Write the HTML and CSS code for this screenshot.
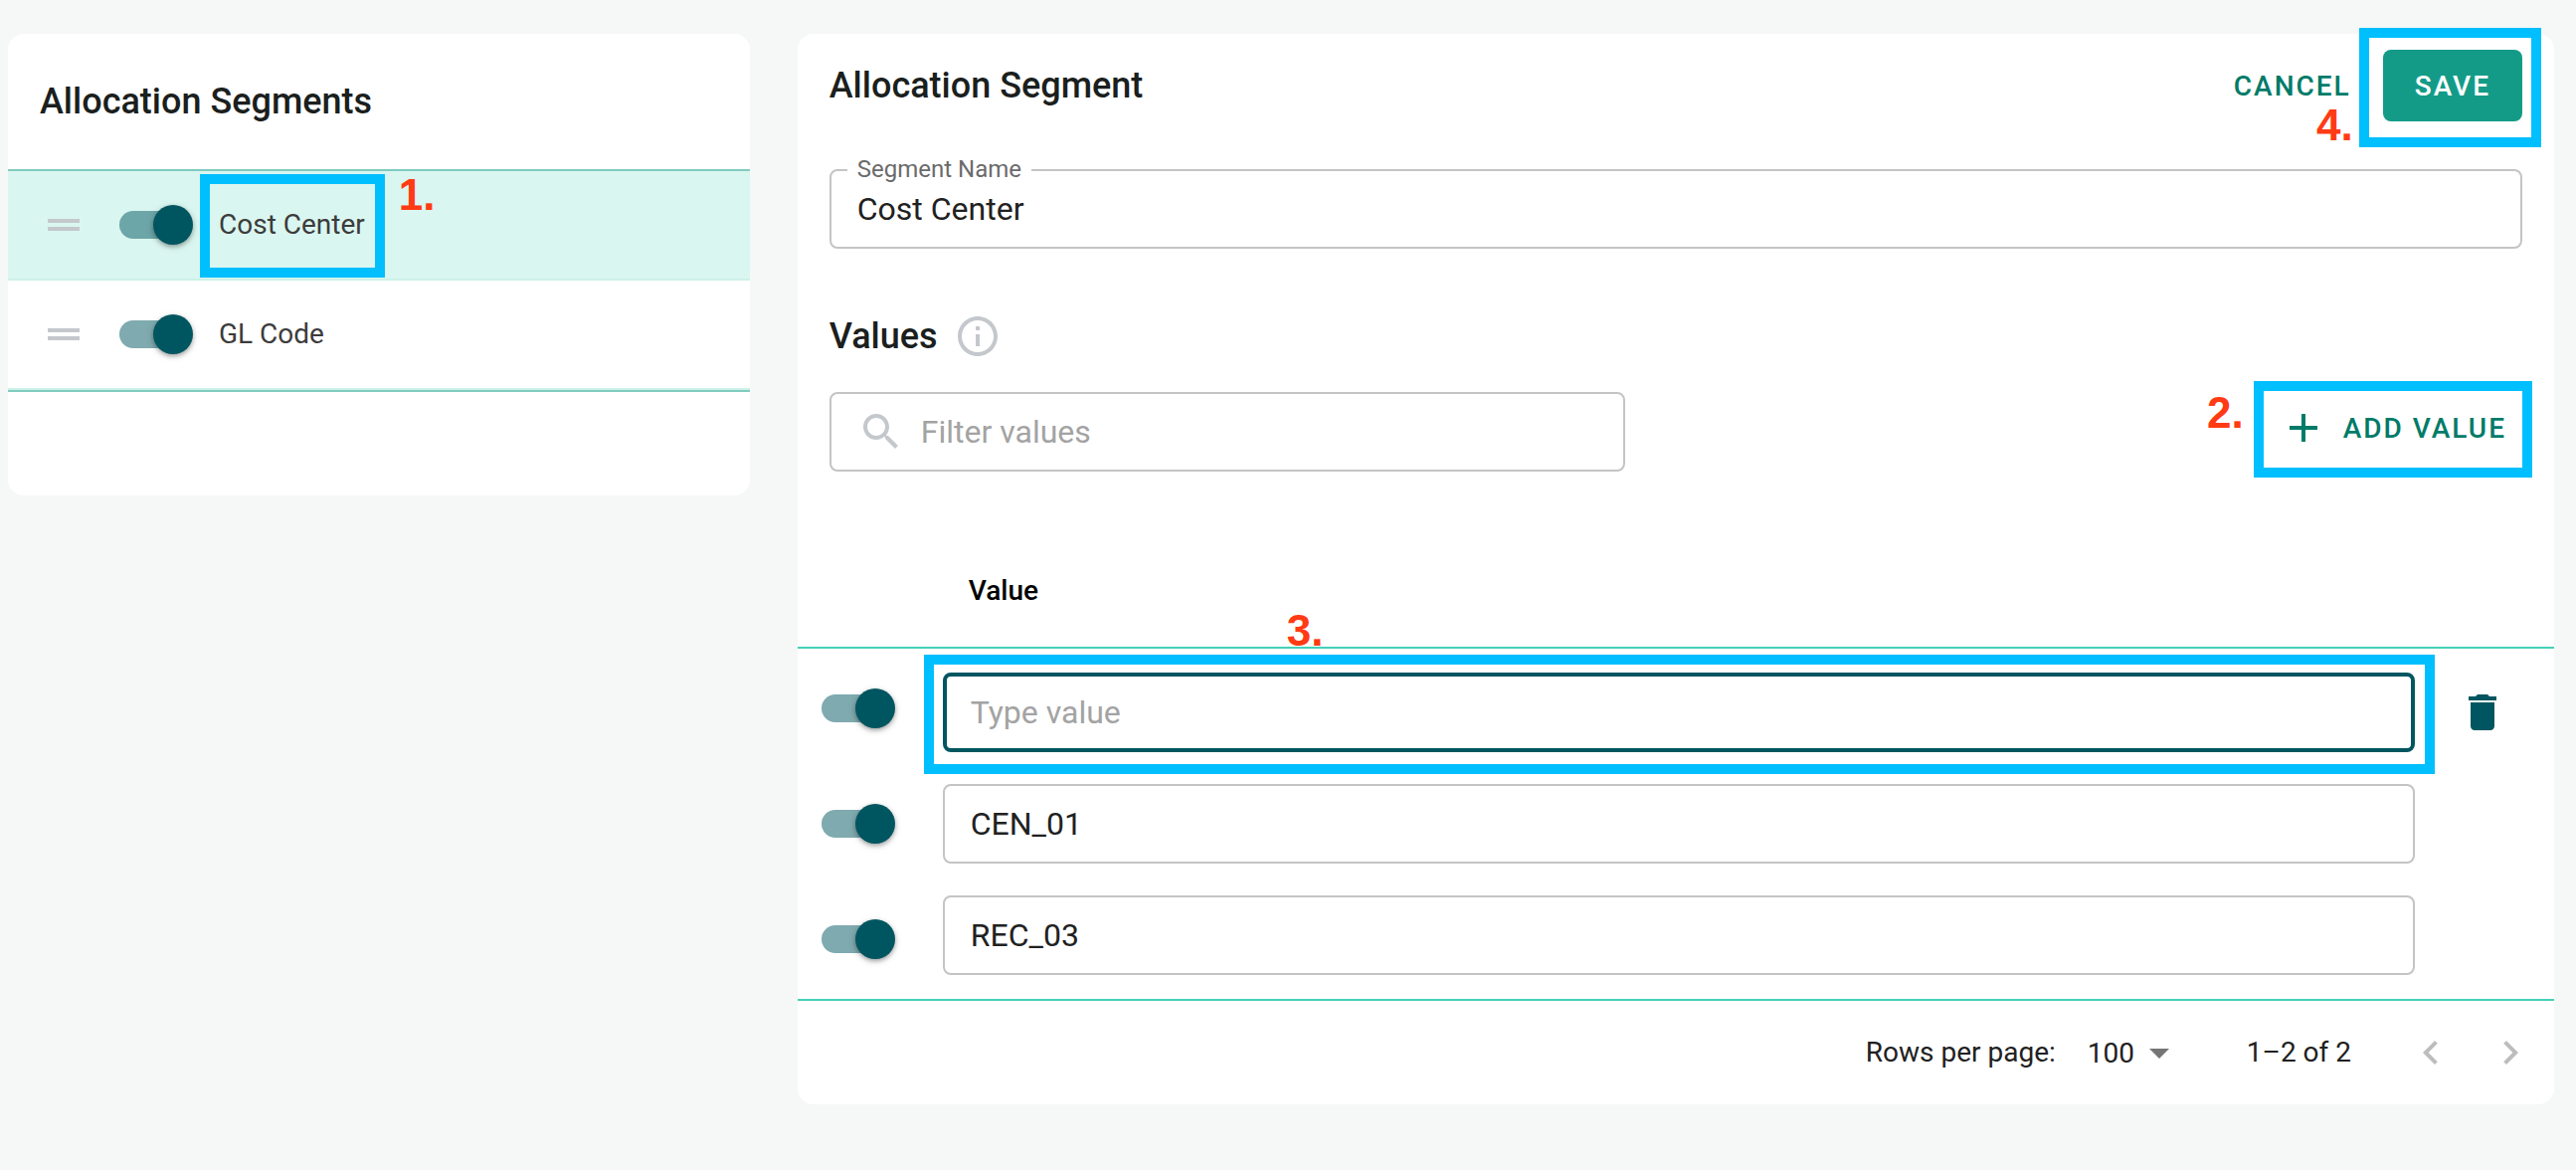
FILE: index.html
```
<!DOCTYPE html>
<html lang="en">
<head>
    <meta charset="UTF-8">
    <meta name="viewport" content="width=device-width, initial-scale=1">
    <title>Allocation Segments</title>
    <link rel="stylesheet" href="styles.css">
</head>

<body>
    <main class="page">

        <!-- segment list -->
        <section class="card segments">
            <h2 class="title segments-title">Allocation Segments</h2>
            <ul class="segment-list">
                <li class="segment active">
                    <svg class="icon handle" viewBox="0 0 24 24"><path d="M20 9H4v2h16V9zM4 15h16v-2H4v2z"/></svg>
                    <input class="switch" type="checkbox" id="seg1" checked>
                    <span class="callout callout1">
                        <label for="seg1">Cost Center</label>
                        <span class="frame"></span>
                        <b class="step">1.</b>
                    </span>
                </li>
                <li class="segment">
                    <svg class="icon handle" viewBox="0 0 24 24"><path d="M20 9H4v2h16V9zM4 15h16v-2H4v2z"/></svg>
                    <input class="switch" type="checkbox" id="seg2" checked>
                    <label for="seg2">GL Code</label>
                </li>
            </ul>
        </section>

        <!-- segment form -->
        <section class="card detail">
            <header class="detail-head">
                <h2 class="title">Allocation Segment</h2>
                <div class="actions">
                    <button class="btn" type="button">CANCEL</button>
                    <span class="callout callout4">
                        <button class="btn btn-fill" type="button">SAVE</button>
                        <span class="frame"></span>
                        <b class="step">4.</b>
                    </span>
                </div>
            </header>

            <div class="field">
                <input class="text" type="text" id="segName" value="Cost Center">
                <label class="field-label" for="segName">Segment Name</label>
            </div>

            <div class="values-head">
                <h3 class="title">Values</h3>
                <svg class="icon" viewBox="0 0 24 24"><path d="M11 7h2v2h-2zm0 4h2v6h-2zm1-9C6.48 2 2 6.48 2 12s4.48 10 10 10 10-4.48 10-10S17.52 2 12 2zm0 18c-4.41 0-8-3.59-8-8s3.59-8 8-8 8 3.59 8 8-3.59 8-8 8z"/></svg>
            </div>

            <div class="toolbar">
                <div class="search">
                    <svg class="icon search-icon" viewBox="0 0 24 24"><path d="M15.5 14h-.79l-.28-.27C15.41 12.59 16 11.11 16 9.5 16 5.91 13.09 3 9.5 3S3 5.91 3 9.5 5.91 16 9.5 16c1.61 0 3.09-.59 4.23-1.57l.27.28v.79l5 4.99L20.49 19l-4.99-5zm-6 0C7.01 14 5 11.99 5 9.5S7.01 5 9.5 5 14 7.01 14 9.5 11.99 14 9.5 14z"/></svg>
                    <input class="text" type="text" placeholder="Filter values" aria-label="Filter values">
                </div>
                <span class="callout callout2">
                    <button class="btn btn-add" type="button">
                        <svg class="icon" viewBox="0 0 24 24"><path d="M19 13h-6v6h-2v-6H5v-2h6V5h2v6h6v2z"/></svg>
                        ADD VALUE
                    </button>
                    <span class="frame"></span>
                    <b class="step">2.</b>
                </span>
            </div>

            <table class="values">
                <thead>
                    <tr>
                        <th class="col-switch"></th>
                        <th>Value</th>
                        <th class="col-action"></th>
                    </tr>
                </thead>
                <tbody>
                    <tr>
                        <td class="col-switch"><input class="switch" type="checkbox" aria-label="Active" checked></td>
                        <td>
                            <div class="callout callout3">
                                <input class="text focused" type="text" placeholder="Type value" aria-label="Value">
                                <span class="frame"></span>
                                <b class="step">3.</b>
                            </div>
                        </td>
                        <td class="col-action">
                            <button class="icon-btn delete" type="button" aria-label="Delete">
                                <svg class="icon" viewBox="0 0 24 24"><path d="M6 19c0 1.1.9 2 2 2h8c1.1 0 2-.9 2-2V7H6v12zM19 4h-3.5l-1-1h-5l-1 1H5v2h14V4z"/></svg>
                            </button>
                        </td>
                    </tr>
                    <tr>
                        <td class="col-switch"><input class="switch" type="checkbox" aria-label="Active" checked></td>
                        <td><input class="text" type="text" value="CEN_01" aria-label="Value"></td>
                        <td class="col-action"></td>
                    </tr>
                    <tr>
                        <td class="col-switch"><input class="switch" type="checkbox" aria-label="Active" checked></td>
                        <td><input class="text" type="text" value="REC_03" aria-label="Value"></td>
                        <td class="col-action"></td>
                    </tr>
                </tbody>
            </table>

            <footer class="pager">
                <label for="rows">Rows per page:</label>
                <div class="select">
                    <select id="rows">
                        <option>100</option>
                    </select>
                    <svg class="icon arrow" viewBox="0 0 24 24"><path d="M7 10l5 5 5-5z"/></svg>
                </div>
                <span class="range">1–2 of 2</span>
                <div class="pager-nav">
                    <button class="icon-btn" type="button" aria-label="Previous page">
                        <svg class="icon" viewBox="0 0 24 24"><path d="M15.41 7.41L14 6l-6 6 6 6 1.41-1.41L10.83 12z"/></svg>
                    </button>
                    <button class="icon-btn" type="button" aria-label="Next page">
                        <svg class="icon" viewBox="0 0 24 24"><path d="M10 6L8.59 7.41 13.17 12l-4.58 4.59L10 18l6-6z"/></svg>
                    </button>
                </div>
            </footer>
        </section>

    </main>
</body>
</html>
```
FILE: styles.css
```
* {
    box-sizing: border-box;
}

body,
ul,
h2,
h3 {
    margin: 0;
    padding: 0;
}

body {
    background-color: #f5f8f7;
    font-family: Roboto, "Liberation Sans", sans-serif;
    font-size: 28px;
    line-height: 40px;
    color: #212121;
}

input,
select,
button {
    font-family: inherit;
    margin: 0;
}

.page {
    display: grid;
    grid-template-columns: minmax(0, 19fr) minmax(0, 45fr);
    gap: 48px;
    align-items: start;
    padding: 34px 22px 64px 8px;
}

.card {
    background: #fff;
    border-radius: 16px;
}

.title {
    font-size: 36px;
    font-weight: 500;
    line-height: 48px;
    color: #1b1f1e;
}

.icon {
    display: block;
    flex: none;
    width: 48px;
    height: 48px;
    fill: #c4c8cc;
}

/* switch */
.switch {
    appearance: none;
    display: grid;
    align-items: center;
    flex: none;
    width: 74px;
    height: 40px;
    cursor: pointer;
}

.switch::before,
.switch::after {
    content: "";
    grid-area: 1 / 1;
}

.switch::before {
    width: 68px;
    height: 28px;
    border-radius: 14px;
    background: #005660;
    opacity: .5;
}

.switch::after {
    justify-self: end;
    width: 40px;
    height: 40px;
    border-radius: 50%;
    background: #005660;
    box-shadow: 0 2px 4px rgba(0, 0, 0, .3), 0 2px 8px rgba(0, 0, 0, .12);
    z-index: 1;
}

/* buttons */
.btn {
    display: flex;
    align-items: center;
    gap: 16px;
    height: 72px;
    padding: 0 16px;
    border: 0;
    border-radius: 8px;
    background: none;
    color: #007b68;
    font-size: 28px;
    font-weight: 500;
    letter-spacing: 2px;
    cursor: pointer;
}

.btn .icon {
    fill: #007b68;
}

.btn-fill {
    padding: 0 32px;
    background: #149b88;
    color: #fff;
}

.icon-btn {
    display: block;
    padding: 0;
    border: 0;
    background: none;
    cursor: pointer;
}

.icon-btn .icon {
    fill: #bdbdbd;
}

.delete .icon {
    fill: #005660;
}

/* text box */
.text {
    display: block;
    width: 100%;
    height: 80px;
    padding: 0 26px;
    border: 2px solid #c4c4c4;
    border-radius: 8px;
    background: #fff;
    color: #212121;
    font-size: 32px;
    outline: 0;
}

.text::placeholder {
    color: #a3a3a3;
}

.text.focused {
    padding: 0 24px;
    border: 4px solid #005660;
}

/* numbered callouts over the controls */
.callout {
    position: relative;
}

.frame {
    position: absolute;
    border: 10px solid #00bfff;
    pointer-events: none;
}

.step {
    position: absolute;
    color: #ff3b14;
    font-family: "Liberation Sans", Arial, sans-serif;
    font-size: 44px;
    line-height: 48px;
    letter-spacing: 0;
}

.callout1 .frame { inset: -31px -20px -33px -19px; }
.callout1 .step { top: -34px; left: 100%; margin-left: 34px; }

.callout2 .frame { inset: -11px -10px -14px -10px; }
.callout2 .step { top: -3px; right: 100%; margin-right: 20px; }

.callout3 .frame { inset: -18px -20px -22px -19px; }
.callout3 .step { top: -66px; left: 346px; }

.callout4 .frame { inset: -22px -19px -26px -24px; }
.callout4 .step { top: 52px; right: 100%; margin-right: 30px; }

/* segment list */
.segments {
    padding-bottom: 104px;
}

.segments-title {
    padding: 44px 32px;
}

.segment-list {
    list-style: none;
    border-top: 2px solid #80cbbf;
    border-bottom: 2px solid #80cbbf;
}

.segment {
    display: flex;
    align-items: center;
    height: 110px;
    padding: 0 32px;
    border-bottom: 2px solid #cdf1e8;
    color: #3c3c3c;
}

.segment.active {
    background: #daf6f0;
}

.segment .switch {
    margin: 0 26px 0 32px;
}

/* detail */
.detail-head {
    display: flex;
    align-items: center;
    justify-content: space-between;
    padding: 16px 32px 0;
}

.actions {
    display: flex;
    gap: 16px;
}

.field {
    position: relative;
    margin: 48px 32px 64px;
}

.field-label {
    position: absolute;
    top: -16px;
    left: 18px;
    padding: 0 10px;
    background: #fff;
    color: #6b6b6b;
    font-size: 24px;
    line-height: 32px;
}

.values-head {
    display: flex;
    align-items: center;
    gap: 16px;
    padding: 0 32px;
}

.toolbar {
    display: flex;
    align-items: flex-start;
    justify-content: space-between;
    padding: 32px 32px 64px;
}

.search {
    position: relative;
    width: 47%;
}

.search .text {
    padding-left: 90px;
}

.search-icon {
    position: absolute;
    top: 16px;
    left: 28px;
}

/* values table */
.values {
    width: 100%;
    border-spacing: 0;
    table-layout: fixed;
    border-bottom: 2px solid #45d1b8;
}

.values th {
    height: 114px;
    padding: 0 26px;
    border-bottom: 2px solid #45d1b8;
    color: #000;
    font-weight: 500;
    text-align: left;
}

.values td {
    padding: 16px 0;
    vertical-align: middle;
}

.values tbody tr:first-child td:not(.col-switch) {
    padding-top: 24px;
}

.values tbody tr:last-child td:not(.col-switch) {
    padding-bottom: 24px;
}

.values .col-switch {
    width: 146px;
    padding-left: 24px;
}

.values .col-action {
    width: 140px;
    padding-left: 44px;
}

/* pager */
.pager {
    display: flex;
    align-items: center;
    justify-content: flex-end;
    height: 104px;
    padding-right: 20px;
}

.select {
    position: relative;
    margin: 0 64px 0 32px;
}

.select select {
    appearance: none;
    display: block;
    height: 48px;
    padding: 0 48px 0 0;
    border: 0;
    background: none;
    color: #212121;
    font-size: 28px;
}

.arrow {
    position: absolute;
    top: 0;
    right: 0;
    fill: #757575;
    pointer-events: none;
}

.pager-nav {
    display: flex;
    gap: 32px;
    margin-left: 56px;
}
```
